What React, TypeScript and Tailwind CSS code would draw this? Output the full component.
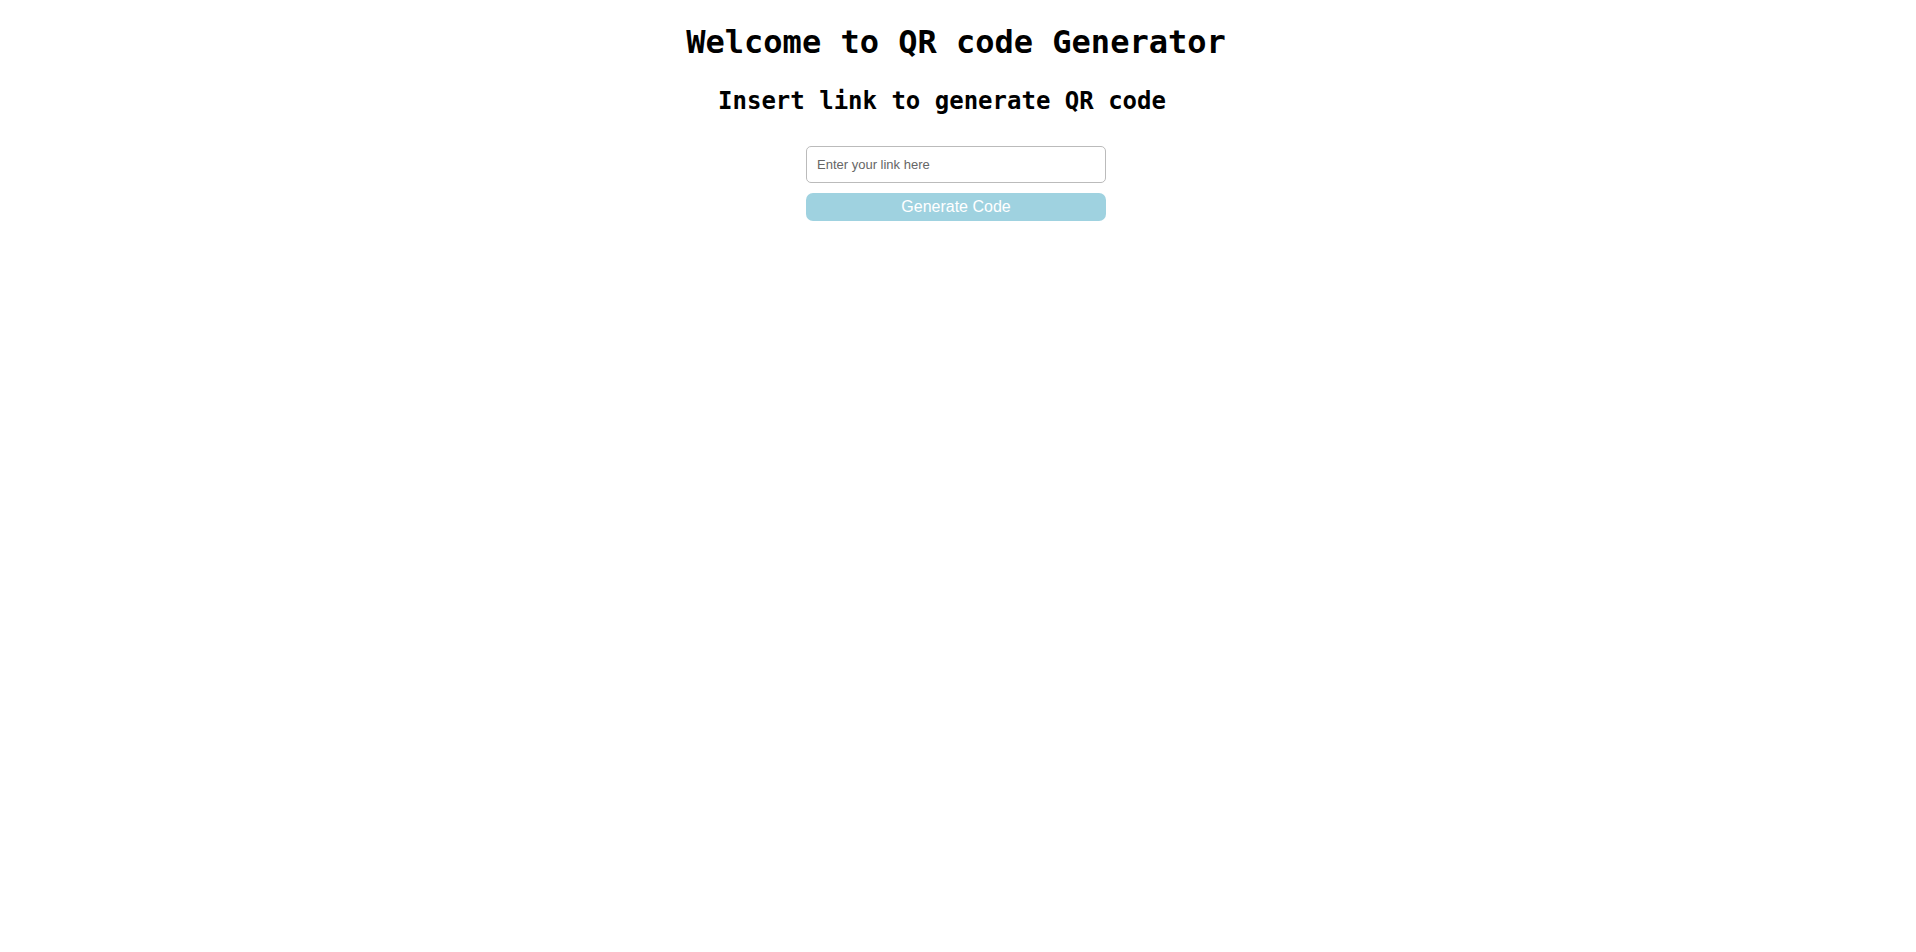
import { useState } from "react";

export default function App() {
  const [link, setLink] = useState("");

  return (
    <main className="flex flex-col items-center bg-white pt-6 pr-1 text-black">
      <h1 className="font-['DejaVu_Sans_Mono',monospace] text-[32px] leading-9 font-bold">
        Welcome to QR code Generator
      </h1>
      <h2 className="mt-[25px] pr-7 font-['DejaVu_Sans_Mono',monospace] text-2xl leading-8 font-bold">
        Insert link to generate QR code
      </h2>
      <form
        className="mt-[29px] flex w-[300px] flex-col gap-[10px] font-['Liberation_Sans',Arial,sans-serif]"
        onSubmit={(event) => event.preventDefault()}
      >
        <input
          type="text"
          aria-label="Link"
          placeholder="Enter your link here"
          value={link}
          onChange={(event) => setLink(event.target.value)}
          className="h-[37px] w-full rounded-[5px] border border-[#bbbbbb] bg-white px-[10px] text-[13px] placeholder:text-[#666666]"
        />
        <button
          type="submit"
          className="h-7 w-full rounded-[7px] bg-[#9fd2e0] text-base leading-7 text-white"
        >
          Generate Code
        </button>
      </form>
    </main>
  );
}
